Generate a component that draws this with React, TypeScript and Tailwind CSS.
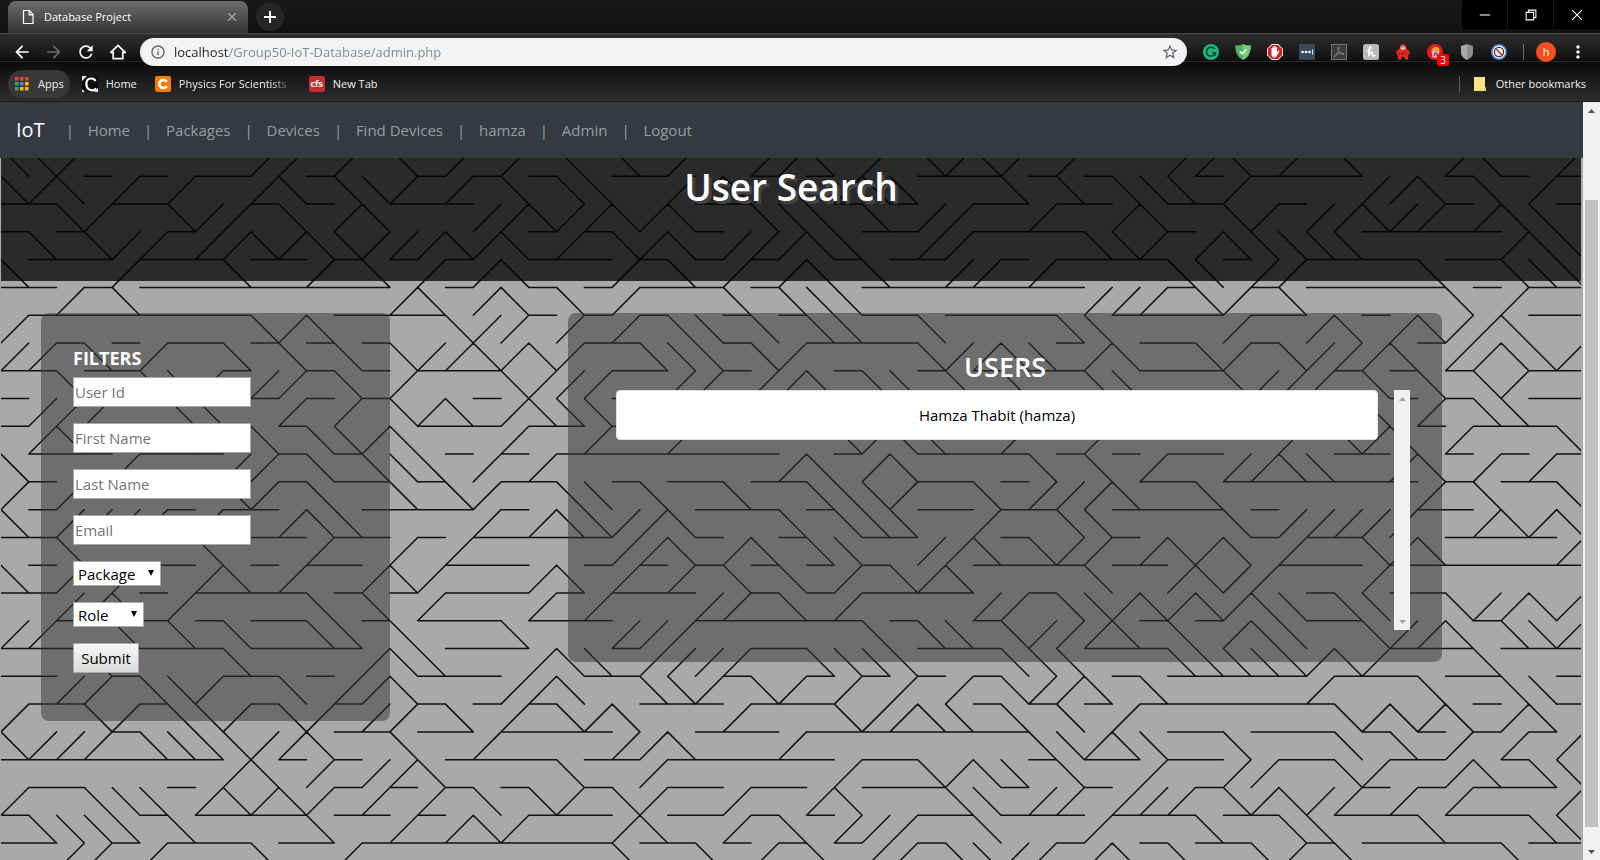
import type { ReactNode } from "react";
import {
  MdArrowBack,
  MdArrowForward,
  MdInfoOutline,
  MdMoreVert,
  MdRefresh,
  MdStarBorder,
} from "react-icons/md";

// Each character is one tile of the backdrop: f rises to the right, b falls to
// the right, and a dash is a flat line along the top edge of the tile.
const TILES = [
  "bbf------ff-f-b-f-f" + "-b-b-f--ffb-f-bfbf-" + "f---ffb-f-b---fb--f",
  "bfb-f-f--fb-bbf-f-b" + "-bb--ffb-b-fbb---b-" + "b-bbb-f----ffb-b-f-",
  "--bf--bff-b-fb---ff" + "bffbfb--bbb-b-ff--f" + "--fb--bf-ffbff-fbb-",
  "-b-bff-ffbfbbfffbfb" + "-f-bfb-fffbb--ff---" + "-bbf-fbbbbb-----fbb",
  "b---f---b--f-b-f-fb" + "---f-b-f-fb-b--ff-f" + "----bb-ff----b--bbb",
  "--f-b---------fb-fb" + "-b-f---b-bbb-------" + "-fff-bf-b-----b-f--",
  "f--------bfb----bff" + "-f-f-bb-b-bb--b----" + "bb----f--fb-fbffb--",
  "ff-b-f--b-b-b-bffbf" + "bf--bbb-bf----bffbb" + "-fb--bf-bfffb-ffbbf",
  "--b--bbf-ff-b-f---b" + "fff--ff-ffb-bb-b-b-" + "-bb---bfff-b-b-bf--",
  "-fff--bb--f-f-bfb-f" + "bbb----------------" + "-----------b-f-bb--",
  "-fb---b--b-bbfb---f" + "--f--f-----bfbb--f-" + "-f------f-bfb-f---b",
  "b---f---ff-b-bbb-f-" + "f--------fb-fb----b" + "-b-f--ffbb--fb-f-f-",
  "f-f-----bf-b--b-bf-" + "-bb-b--b--bbbf--b-f" + "ffb--b-------f-b--b",
  "b-ffff-f--fbb----f-" + "fbbffb---b-bbb--f--" + "bb----b-fffff--fbfb",
  "--b----b---f--f-f--" + "---ffb-fb-bb--ffb-b" + "ff-fbfb-f--bfb----f",
  "b-f-f--fb-f--fbf---" + "fb-f-f-b-b-f-bfb---" + "-b--fbff---f-------",
  "--ffb-f----b-b-f---" + "f-f---ff-b-f----ff-" + "bbfbfbfbb-bb--bffbf",
  "ff--b-b-b--bb-b---b" + "---fff------b-bb-bf" + "ffb-b-fbb--bffb-bbf",
  "---b----b----fbb---" + "fbb-ffff--bbbb---bb" + "b---bbbbbfbf---b---",
  "--ff-bbf--b-ffb---f" + "fb--bbf-bf-f-f-f-bf" + "fb-b-----f---b--bb-",
  "f--bf-bbf-bf-ff-b-f" + "-bfb---f---bffbb-b-" + "b-f-------bfbfb-fb-",
  "bfff-bbbbffb--b--f-" + "---ffb---f--------b" + "bfbb--b---b-b-f-f-f",
  "--------fb-f-ffb---" + "-b--f------f--bfbb-" + "b--f--ff--bf--fb-bb",
  "f--bbb-fbfbf-f-f-b-" + "bf-bf--f--fb---bb-f" + "f-fff-bfbff-f-f---f",
  "-bbbb-b----b--f-fbf" + "---fb--f-b-fff--b--" + "-f---b--bb---b---bb",
  "--ff-f---b--f------" + "---b--b-f-b-ff-bbff" + "-fb-b--bf-b-----b--",
];
const TILE = 27.78;
const FIRST_ROW = -9.5;

const tilePath = TILES.map((row, r) =>
  [...row]
    .map((kind, c) => {
      const x0 = (c * TILE).toFixed(2);
      const x1 = ((c + 1) * TILE).toFixed(2);
      const y0 = (FIRST_ROW + r * TILE).toFixed(2);
      const y1 = (FIRST_ROW + (r + 1) * TILE).toFixed(2);
      if (kind === "f") return `M${x0} ${y1}L${x1} ${y0}`;
      if (kind === "b") return `M${x0} ${y0}L${x1} ${y1}`;
      return `M${x0} ${y0}H${x1}`;
    })
    .join("")
).join("");

function Backdrop() {
  return (
    <svg
      aria-hidden="true"
      className="absolute inset-0 h-full w-full"
      viewBox="0 0 1580 702"
      preserveAspectRatio="xMinYMin slice"
    >
      <path d={tilePath} fill="none" stroke="#111" strokeWidth="1.5" strokeLinecap="round" />
    </svg>
  );
}

function Svg({ size = 16, children, className }: { size?: number; children: ReactNode; className?: string }) {
  return (
    <svg aria-hidden="true" width={size} height={size} viewBox="0 0 16 16" fill="none" className={className}>
      {children}
    </svg>
  );
}

function TabStrip() {
  return (
    <div className="flex h-[33px] items-stretch bg-gradient-to-b from-[#191919] to-[#101010]">
      <div className="ml-2 mt-px flex w-60 items-center rounded-t-lg bg-gradient-to-b from-[#6e6e6e] to-[#333] pl-3 pr-2.5">
        <Svg className="text-white">
          <path d="M3.500 1.500h6l3.500 4v9h-9.500zM9.200 1.700v4.100h3.700" stroke="currentColor" strokeWidth="1.2" />
        </Svg>
        <span className="ml-2 flex-1 text-[11px] text-white">Database Project</span>
        <button type="button" aria-label="Close tab" className="text-[#a5a5a5]">
          <Svg size={12}>
            <path d="M3 3l10 10M13 3L3 13" stroke="currentColor" strokeWidth="1.800" />
          </Svg>
        </button>
      </div>
      <button
        type="button"
        aria-label="New tab"
        className="ml-2 mt-[3px] flex h-7 w-7 items-center justify-center rounded-full bg-[#262626] text-white"
      >
        <Svg>
          <path d="M8 2v12M2 8h12" stroke="currentColor" strokeWidth="2" />
        </Svg>
      </button>
      <div className="ml-auto flex h-[29px]">
        <button type="button" aria-label="Minimize" className="flex w-[46px] items-center justify-center border-r border-[#161616] bg-black text-white">
          <Svg size={12}>
            <path d="M1 8h14" stroke="currentColor" strokeWidth="1.400" />
          </Svg>
        </button>
        <button type="button" aria-label="Restore" className="flex w-[46px] items-center justify-center border-r border-[#161616] bg-black text-white">
          <Svg size={12}>
            <path d="M1.500 4.500h10v10h-10zM4.500 4.500v-3h10v10h-3" stroke="currentColor" strokeWidth="1.400" />
          </Svg>
        </button>
        <button type="button" aria-label="Close" className="flex w-[46px] items-center justify-center bg-black text-white">
          <Svg size={12}>
            <path d="M1.500 1.500l13 13M14.500 1.500l-13 13" stroke="currentColor" strokeWidth="1.400" />
          </Svg>
        </button>
      </div>
    </div>
  );
}

const extensions: { name: string; icon: ReactNode }[] = [
  {
    name: "Writing check",
    icon: (
      <>
        <circle cx="8" cy="8" r="8" fill="#1cb679" />
        <path d="M11.600 5A4.500 4.500 0 1 0 12.300 9H9" stroke="#0b3d2a" strokeWidth="1.500" />
        <path d="M12.500 8.300v3.200" stroke="#0b3d2a" strokeWidth="1.200" />
      </>
    ),
  },
  {
    name: "Safe browsing",
    icon: (
      <>
        <path d="M8 0c2.500 1.400 5 1.700 7.800 1.500C15.800 8.500 13 13.500 8 16 3 13.500.2 8.500.2 1.500 3 1.700 5.500 1.400 8 0z" fill="#53b45f" />
        <path d="M8 0c2.500 1.400 5 1.700 7.800 1.500C15.800 8.500 13 13.500 8 16z" fill="#79c77f" />
        <path d="M4.800 7.300l2.400 2.500 4.200-4.600" stroke="#fff" strokeWidth="1.600" />
      </>
    ),
  },
  {
    name: "Ad blocker",
    icon: (
      <>
        <path d="M4.700 0h6.600L16 4.700v6.600L11.300 16H4.700L0 11.300V4.700z" fill="#e8e8e8" />
        <path d="M5 .9h6l4.100 4.100v6L11 15.100H5L.9 11V5z" fill="#d81f1f" />
        <path d="M4.500 8V4.600c0-.9 1.200-.9 1.200 0V3.300c0-1 1.400-1 1.400 0v-.6c0-1 1.500-1 1.500 0v.7c0-1 1.400-1 1.400 0v4.900l1-1.400c.7-.8 1.700-.2 1.200.7l-2.500 4.700c-.6 1-1.300 1.200-2.300 1.200-2 0-2.900-1-2.900-2.700z" fill="#fff" />
      </>
    ),
  },
  {
    name: "Password manager",
    icon: (
      <>
        <rect width="16" height="16" rx="1" fill="#374a58" />
        <circle cx="3.500" cy="8" r="1.300" fill="#fff" />
        <circle cx="7" cy="8" r="1.300" fill="#fff" />
        <circle cx="10.500" cy="8" r="1.300" fill="#fff" />
        <path d="M13.700 5.500v5" stroke="#fff" strokeWidth="1" />
      </>
    ),
  },
  {
    name: "PDF tools",
    icon: (
      <>
        <rect x=".5" y=".5" width="15" height="15" fill="#3c3c3c" stroke="#757575" />
        <path d="M7.500 3c-1.300 0 .2 4 1.500 5.700 1.300 1.500 4 2.400 4.200 1.300.2-1.200-4.200-1-6 -.4S2.600 12 3.100 12.800c.8 1 3.200-2.900 4-5S8.400 3 7.500 3z" stroke="#8a8a8a" strokeWidth=".9" />
      </>
    ),
  },
  {
    name: "Coupons",
    icon: (
      <>
        <rect width="16" height="16" rx="2.500" fill="#b9b9b9" />
        <path d="M4.300 7.500c2-.8 3.700-3 3.400-4.300-.6-1.400-1.800 1.200-1.800 4.800v4.200c.4-2.700 1.500-4.400 2.800-4.100 1.500.4-.2 4.200 1.700 4.100.9 0 1.400-.6 1.700-1.200" stroke="#fff" strokeWidth="1.500" />
      </>
    ),
  },
  {
    name: "Private access",
    icon: (
      <>
        <path d="M5 3.500C5 1.300 6.300 0 8 0s3 1.300 3 3.500l1 2c1.500.1 2.500.9 2.500 2.500v2.500h-1.300V15.500H9.500V13h-3v2.500H2.800v-5H1.500V8c0-1.600 1-2.400 2.500-2.500z" fill="#e62a1c" />
        <ellipse cx="8" cy="4" rx="2.700" ry="1.800" fill="#f3e5e0" />
        <circle cx="7" cy="3.800" r=".6" fill="#222" />
        <circle cx="9" cy="3.800" r=".6" fill="#222" />
        <path d="M4.500 9v2M11.500 9v2M6.700 8.500h2.600v2H6.700z" stroke="#8f1009" strokeWidth=".8" />
      </>
    ),
  },
  {
    name: "Popcorn",
    icon: (
      <>
        <circle cx="8" cy="8" r="8" fill="#e5191b" />
        <path d="M4.500 6.500h8l-1 7h-6z" fill="#f2b3b0" />
        <path d="M4.500 6.500c0-2 1.500-2 2-1.800C6.500 2.500 9 2 9.500 3.500c2-.8 3.200 1 2.800 3z" fill="#f0b53d" />
        <path d="M7.500 12c0-3 1-3.500 2-3s.5 3 .5 3" stroke="#4c4c77" strokeWidth="1.200" />
      </>
    ),
  },
  {
    name: "Tracker shield",
    icon: (
      <>
        <path d="M8 0l6 2v7c0 3.500-3 5.500-6 7z" fill="#8f8f8f" />
        <path d="M8 0L2 2v7c0 3.500 3 5.500 6 7z" fill="#a9a9a9" />
      </>
    ),
  },
  {
    name: "Script blocker",
    icon: (
      <>
        <circle cx="8" cy="8" r="7.200" fill="#fff" stroke="#3f86d2" strokeWidth="1.600" />
        <circle cx="8" cy="8" r="4.600" fill="#f5f5f5" stroke="#5a2a2e" strokeWidth="1.300" />
        <path d="M4.800 4.800l6.400 6.400" stroke="#c0292b" strokeWidth="1.500" />
      </>
    ),
  },
];

function Toolbar() {
  return (
    <div className="flex h-9 items-center pt-0.5">
      <div className="flex w-[140px] items-center gap-2 pl-3 text-white">
        <button type="button" aria-label="Back" className="flex w-5 justify-center"><MdArrowBack size={20} /></button>
        <button type="button" aria-label="Forward" className="ml-1 flex w-5 justify-center text-[#6d6d6d]"><MdArrowForward size={20} /></button>
        <button type="button" aria-label="Reload" className="ml-1 flex w-5 justify-center"><MdRefresh size={20} /></button>
        <button type="button" aria-label="Home page" className="ml-1 flex w-5 justify-center">
          <Svg>
            <path d="M.8 8.300L8 1.400l7.200 6.900h-2.400v6.400H3.200V8.300z" stroke="currentColor" strokeWidth="1.700" />
          </Svg>
        </button>
      </div>
      <div className="flex h-7 flex-1 items-center rounded-full bg-[#f1f3f4] pl-2.5 pr-2 text-[#5f6368]">
        <MdInfoOutline size={16} />
        <input
          type="text"
          aria-label="Address"
          defaultValue="localhost/Group50-IoT-Database/admin.php"
          className="ml-2 h-5 min-w-0 flex-1 bg-[linear-gradient(to_right,#202124_55px,#80868b_55px)] bg-clip-text text-[13px] text-transparent outline-none"
        />
        <button type="button" aria-label="Bookmark this page"><MdStarBorder size={18} /></button>
      </div>
      <div className="flex items-center gap-4 pl-4">
        {extensions.map((ext) => (
          <button key={ext.name} type="button" aria-label={ext.name} className="relative">
            <Svg>{ext.icon}</Svg>
            {ext.name === "Popcorn" && (
              <span className="absolute -bottom-1.5 -right-1.5 flex h-3 w-3 items-center justify-center rounded-xs bg-[#f00] text-[10px] leading-3 text-white">
                3
              </span>
            )}
          </button>
        ))}
      </div>
      <div className="ml-4 h-4 w-px bg-[#6a6a6a]" />
      <button
        type="button"
        className="ml-3 flex h-5 w-5 items-center justify-center rounded-full bg-[#f4511e] text-[11px] text-white"
      >
        h
      </button>
      <button type="button" aria-label="Menu" className="ml-3 mr-3 text-white"><MdMoreVert size={20} /></button>
    </div>
  );
}

const appColors = ["#e8453c", "#e8453c", "#e8453c", "#34a853", "#4285f4", "#fbbc05", "#34a853", "#fbbc05", "#fbbc05"];

function BookmarksBar() {
  return (
    <div className="flex h-8 items-center pb-0.5 pr-3.5 text-[11px] text-[#eee]">
      <a href="#apps" className="ml-2 flex h-7 items-center gap-2 rounded-full bg-[#383838] px-1.5">
        <Svg>
          {appColors.map((color, i) => (
            <rect key={i} x={1 + (i % 3) * 5} y={1 + Math.floor(i / 3) * 5} width="3.500" height="3.500" fill={color} />
          ))}
        </Svg>
        Apps
      </a>
      <a href="#home" className="ml-3 flex items-center gap-2">
        <Svg>
          <rect width="16" height="16" fill="#0c0c0c" />
          <path d="M0 0h5L0 5zM0 16v-3l3 3zM16 12v4h-4z" fill="#dfe8df" />
          <path d="M13.500 5C12 1.800 5.500 1 4.500 6.500 3.700 12 7 14.500 10.500 14.300c2 0 3-.8 3.800-1.800" stroke="#fff" strokeWidth="2.200" />
        </Svg>
        Home
      </a>
      <a href="#physics" className="ml-[18px] flex items-center gap-2">
        <Svg>
          <rect width="16" height="16" rx="2" fill="#f57c0a" />
          <path d="M11.700 5.800A4 4 0 1 0 11.700 10.200" stroke="#fff" strokeWidth="2.600" />
        </Svg>
        <span className="whitespace-nowrap [mask-image:linear-gradient(to_right,#000_85%,#0004)]">
          Physics For Scientists
        </span>
      </a>
      <a href="#new-tab" className="ml-[22px] flex items-center gap-2">
        <span className="flex h-4 w-4 items-center justify-center rounded-xs bg-[#c92a2f] text-[9px] font-bold leading-4 text-white">
          cfs
        </span>
        New Tab
      </a>
      <div className="ml-auto h-4 w-px bg-[#5a5a5a]" />
      <a href="#other" className="ml-3 flex items-center gap-2">
        <Svg>
          <path d="M2 1h11v10.500h1V15H2z" fill="#ffe38a" />
          <path d="M12 11.500h2V15h-2z" fill="#f0cb58" />
        </Svg>
        Other bookmarks
      </a>
    </div>
  );
}

const links = ["Home", "Packages", "Devices", "Find Devices", "hamza", "Admin", "Logout"];

function NavBar() {
  return (
    <nav className="flex h-14 items-center bg-[#353a42] pl-4">
      <a href="#iot" className="text-xl text-white">IoT</a>
      <ul className="ml-[21px] flex text-[15px] text-[#9a9d9f]">
        {links.map((label) => (
          <li key={label} className="flex items-center">
            <span className="w-2 text-center">|</span>
            <a href={"#" + label.toLowerCase().replace(" ", "-")} className="px-3.5">
              {label}
            </a>
          </li>
        ))}
      </ul>
    </nav>
  );
}

function Picker({ label, width }: { label: string; width: string }) {
  return (
    <div className={"relative " + width}>
      <select
        aria-label={label}
        className="block h-[25px] w-full appearance-none border border-[#a9a9a9] bg-white pl-1 text-[15px] leading-5 text-black outline-none"
      >
        <option>{label}</option>
      </select>
      <svg aria-hidden="true" width="6" height="6" viewBox="0 0 6 6" className="pointer-events-none absolute right-[7px] top-[9px]">
        <path d="M0 0h6L3 6z" fill="#000" />
      </svg>
    </div>
  );
}

function Filters() {
  return (
    <form className="w-[22.65%] shrink-0 self-start rounded-lg bg-[#333]/50 px-8 pb-12 pt-8" onSubmit={(e) => e.preventDefault()}>
      <h2 className="mb-1.5 text-lg font-bold leading-[26px] text-white">FILTERS</h2>
      <div className="flex flex-col items-start gap-4">
        {["User Id", "First Name", "Last Name", "Email"].map((name) => (
          <input
            key={name}
            type="text"
            aria-label={name}
            placeholder={name}
            className="h-[30px] w-[178px] border border-[#a9a9a9] bg-white px-px text-[15px] text-black outline-none placeholder:text-[#757575]"
          />
        ))}
        <Picker label="Package" width="w-[88px]" />
        <Picker label="Role" width="w-[71px]" />
        <button
          type="submit"
          className="h-[30px] w-[66px] border border-[#a9a9a9] bg-gradient-to-b from-[#f6f6f6] to-[#dcdcdc] text-[15px] text-black"
        >
          Submit
        </button>
      </div>
    </form>
  );
}

function Arrow({ up, color }: { up?: boolean; color: string }) {
  return (
    <span className="flex h-[17px] items-center justify-center">
      <svg aria-hidden="true" width="7" height="4" viewBox="0 0 7 4">
        <path d={up ? "M0 4h7L3.500 0z" : "M0 0h7L3.500 4z"} fill={color} />
      </svg>
    </span>
  );
}

function Users() {
  return (
    <section className="ml-[11.55%] w-[56.8%] shrink-0 self-start rounded-lg bg-[#333]/50 px-8 pb-8 pt-9">
      <h2 className="mb-1.5 text-center text-[27px] font-semibold leading-[35px] text-white">USERS</h2>
      <div className="flex h-60">
        <ul className="flex-1 px-4">
          <li className="flex h-[50px] items-center justify-center rounded border border-[#dfdfdf] bg-white text-[15px] text-black">
            Hamza Thabit (hamza)
          </li>
        </ul>
        <div className="flex w-4 flex-col justify-between bg-[#f1f1f1]">
          <Arrow up color="#a3a3a3" />
          <Arrow color="#a3a3a3" />
        </div>
      </div>
    </section>
  );
}

function PageScrollbar() {
  return (
    <div className="flex w-[17px] flex-col bg-[#f1f1f1]">
      <Arrow up color="#505050" />
      <div className="flex flex-1 flex-col px-0.5">
        <div className="flex-[81]" />
        <div className="flex-[627] bg-[#c1c1c1]" />
        <div className="flex-[16]" />
      </div>
      <Arrow color="#505050" />
    </div>
  );
}

export default function App() {
  return (
    <div className="flex min-h-screen flex-col font-['Open_Sans','Noto_Sans',sans-serif]">
      <header className="border-b border-[#1c1c1c] bg-[#0b0b0b]">
        <TabStrip />
        <div className="bg-[linear-gradient(to_bottom,#4a4a4a_0,#4a4a4a_1px,#2e2e2e_1px,#111_27px,#000_28px,#2a2a2a_28px,#2a2a2a_29px,#0b0b0b_29px,#2e2e2e_100%)]">
          <Toolbar />
          <BookmarksBar />
        </div>
      </header>
      <div className="flex flex-1">
        <div className="flex min-w-0 flex-1 flex-col bg-[#a9a9a9]">
          <NavBar />
          <main className="relative ml-px mr-0.5 flex-1">
            <Backdrop />
            <div className="relative">
              <div className="h-[123px] bg-black/75 pt-1">
                <h1 className="text-center text-[37px] font-semibold leading-[50px] text-white [text-shadow:3px_3px_0_#444]">
                  User Search
                </h1>
              </div>
              <div className="flex pl-10 pt-8">
                <Filters />
                <Users />
              </div>
            </div>
          </main>
        </div>
        <PageScrollbar />
      </div>
    </div>
  );
}
